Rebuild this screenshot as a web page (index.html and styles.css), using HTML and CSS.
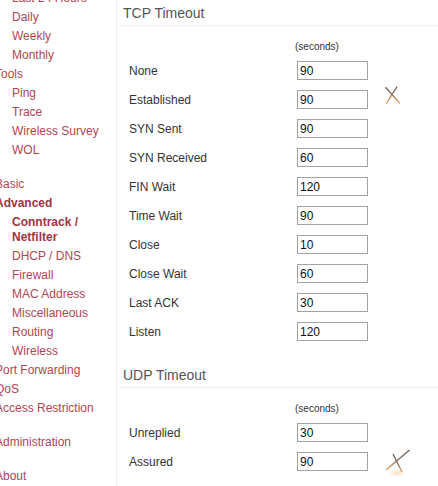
FILE: index.html
```html
<!DOCTYPE html>
<html>
<head>
<meta charset="utf-8">
<link rel="stylesheet" href="styles.css">
</head>
<body>
<div class="page">
  <nav class="side">
    <ul class="menu">
      <li class="sub">Last 24 Hours</li>
      <li class="sub">Daily</li>
      <li class="sub">Weekly</li>
      <li class="sub">Monthly</li>
      <li class="top">Tools</li>
      <li class="sub">Ping</li>
      <li class="sub">Trace</li>
      <li class="sub">Wireless Survey</li>
      <li class="sub">WOL</li>
      <li class="top gap">Basic</li>
      <li class="top bold">Advanced</li>
      <li class="sub bold">Conntrack / Netfilter</li>
      <li class="sub">DHCP / DNS</li>
      <li class="sub">Firewall</li>
      <li class="sub">MAC Address</li>
      <li class="sub">Miscellaneous</li>
      <li class="sub">Routing</li>
      <li class="sub">Wireless</li>
      <li class="top">Port Forwarding</li>
      <li class="top">QoS</li>
      <li class="top">Access Restriction</li>
      <li class="top gap">Administration</li>
      <li class="top gap">About</li>
    </ul>
  </nav>
  <main class="content">
    <section class="group">
      <h2 class="title">TCP Timeout</h2>
      <div class="units">(seconds)</div>
      <div class="row"><label class="lbl">None</label><input class="field" type="text" value="90"></div>
      <div class="row"><label class="lbl">Established</label><input class="field" type="text" value="90">
        <svg class="mark mark1" width="16" height="20" viewBox="0 0 16 20">
          <defs>
            <linearGradient id="g1" x1="0" y1="0" x2="0" y2="1">
              <stop offset="0" stop-color="#6f6258"/>
              <stop offset="0.55" stop-color="#9a7a5c"/>
              <stop offset="1" stop-color="#f0a860"/>
            </linearGradient>
          </defs>
          <line x1="0.5" y1="1.3" x2="15" y2="17.5" stroke="url(#g1)" stroke-width="1.3"/>
          <line x1="12" y1="0.7" x2="1" y2="18" stroke="url(#g1)" stroke-width="1.3"/>
        </svg>
      </div>
      <div class="row"><label class="lbl">SYN Sent</label><input class="field" type="text" value="90"></div>
      <div class="row"><label class="lbl">SYN Received</label><input class="field" type="text" value="60"></div>
      <div class="row"><label class="lbl">FIN Wait</label><input class="field" type="text" value="120"></div>
      <div class="row"><label class="lbl">Time Wait</label><input class="field" type="text" value="90"></div>
      <div class="row"><label class="lbl">Close</label><input class="field" type="text" value="10"></div>
      <div class="row"><label class="lbl">Close Wait</label><input class="field" type="text" value="60"></div>
      <div class="row"><label class="lbl">Last ACK</label><input class="field" type="text" value="30"></div>
      <div class="row"><label class="lbl">Listen</label><input class="field" type="text" value="120"></div>
    </section>
    <section class="group">
      <h2 class="title">UDP Timeout</h2>
      <div class="units">(seconds)</div>
      <div class="row"><label class="lbl">Unreplied</label><input class="field" type="text" value="30"></div>
      <div class="row"><label class="lbl">Assured</label><input class="field" type="text" value="90">
        <svg class="mark mark2" width="27" height="30" viewBox="0 0 27 30">
          <defs>
            <linearGradient id="g2" x1="0" y1="0" x2="0" y2="1">
              <stop offset="0" stop-color="#5e5650"/>
              <stop offset="0.6" stop-color="#8e6a52"/>
              <stop offset="1" stop-color="#f2a458"/>
            </linearGradient>
            <radialGradient id="glow" cx="0.5" cy="0.5" r="0.5">
              <stop offset="0" stop-color="#fbd7a8" stop-opacity="0.8"/>
              <stop offset="1" stop-color="#fbd7a8" stop-opacity="0"/>
            </radialGradient>
          </defs>
          <ellipse cx="12" cy="25" rx="8" ry="4" fill="url(#glow)"/>
          <line x1="24.5" y1="2" x2="1" y2="22" stroke="url(#g2)" stroke-width="1.2"/>
          <line x1="8" y1="6" x2="17" y2="24" stroke="url(#g2)" stroke-width="1.2"/>
        </svg>
      </div>
    </section>
  </main>
</div>
</body>
</html>
```
FILE: styles.css
```css
html, body {
  margin: 0;
  padding: 0;
  background: #ffffff;
  overflow: hidden;
}
body {
  font-family: "Liberation Sans", Arial, sans-serif;
  font-size: 12px;
  color: #333;
}
.page {
  display: flex;
  align-items: stretch;
  min-height: 486px;
}
.side {
  width: 116px;
  flex: 0 0 116px;
  border-right: 1px solid #efefef;
}
.menu {
  list-style: none;
  margin: -11px 0 0 -5px;
  padding: 0;
}
.menu li {
  line-height: 15px;
  padding: 2px 0;
  color: #b04652;
}
.menu .sub {
  padding-left: 17px;
}
.menu .bold {
  font-weight: bold;
  color: #a0343f;
}
.menu .gap {
  margin-top: 15px;
}
.content {
  flex: 1;
  padding-left: 3px;
}
.group {
  margin-bottom: 0;
}
.group + .group {
  margin-top: 24px;
}
.title {
  font-size: 14px;
  font-weight: normal;
  color: #555;
  line-height: 20px;
  margin: 3px 0 0;
  padding: 0 0 2px 3px;
  border-bottom: 1px solid #eeeeee;
}
.units {
  font-size: 10px;
  line-height: 12px;
  color: #333;
  padding-left: 175px;
  margin: 15px 0 8px;
}
.row {
  display: flex;
  align-items: center;
  height: 19px;
  margin-bottom: 10px;
  padding-left: 9px;
}
.lbl {
  width: 168px;
  flex: 0 0 168px;
  color: #333;
}
.field {
  box-sizing: border-box;
  width: 71px;
  height: 19px;
  border: 1px solid #a2a2a2;
  padding: 0 2px;
  margin: 0;
  font-family: "Liberation Sans", Arial, sans-serif;
  font-size: 12px;
  color: #111;
  background: #fff;
  outline: none;
}
.mark {
  align-self: flex-start;
  margin-top: -4px;
}
.mark1 {
  margin-left: 17px;
}
.mark2 {
  margin-left: 17px;
}
```
